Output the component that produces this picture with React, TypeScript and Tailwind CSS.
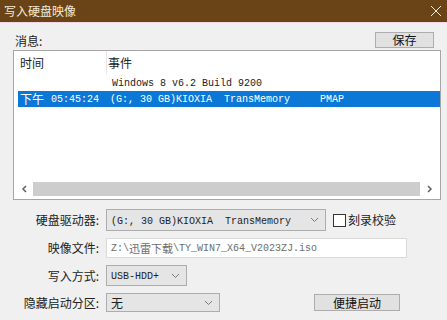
import React from 'react';

const cjk = { fontFamily: '"Noto Sans CJK SC", "Microsoft YaHei", sans-serif' };
const mono = { fontFamily: '"Liberation Mono", "DejaVu Sans Mono", monospace' };

function Chevron() {
  return (
    <svg width="9" height="6" viewBox="0 0 9 6" className="shrink-0">
      <path d="M1 1 L4.5 4.5 L8 1" fill="none" stroke="#7a7a7a" strokeWidth="1" />
    </svg>
  );
}

function Combo({ width, height, children }: { width: string; height: string; children: React.ReactNode }) {
  return (
    <div
      className={`flex items-center justify-between border border-[#adadad] bg-[#e5e5e5] pl-[4px] pr-[6px] ${width} ${height}`}
    >
      <div className="truncate text-[10px] text-[#222]">{children}</div>
      <Chevron />
    </div>
  );
}

function Label({ children }: { children: React.ReactNode }) {
  return (
    <div className="w-[101px] pr-[2px] text-right text-[12px] leading-none text-[#222]" style={cjk}>
      {children}
    </div>
  );
}

export default function App() {
  return (
    <div className="w-[447px] h-[320px] overflow-hidden bg-[#f0f0f0] flex flex-col" style={cjk}>
      {/* title bar */}
      <div className="h-[22px] bg-[#6a4416] flex items-center justify-between pl-[4px] pr-[5px] shrink-0">
        <span className="text-[12px] text-[#f3ead9] leading-none">写入硬盘映像</span>
        <svg width="12" height="12" viewBox="0 0 12 12">
          <path d="M1 1 L11 11 M11 1 L1 11" stroke="#f3ead9" strokeWidth="1" />
        </svg>
      </div>
      <div className="h-[1px] bg-[#f2d6e8] shrink-0" />

      {/* message header */}
      <div className="h-[27px] flex items-end justify-between pl-[15px] pr-[13px] shrink-0">
        <span className="text-[12px] leading-none text-[#222] mb-[3px]">消息:</span>
        <button className="w-[59px] h-[16px] mb-[2px] border border-[#adadad] bg-[#e1e1e1] text-[12px] leading-none text-[#111] flex items-center justify-center">
          保存
        </button>
      </div>

      {/* list box */}
      <div className="ml-[13px] mr-[6px] h-[150px] border border-[#a6a6a6] bg-white flex flex-col shrink-0">
        <div className="h-[24px] flex items-center text-[12px] text-[#222] shrink-0">
          <div className="w-[92px] pl-[6px] h-full flex items-center">时间</div>
          <div className="w-[1px] h-full bg-[#e8e8e8]" />
          <div className="pl-[1px]">事件</div>
        </div>
        <div className="h-[16px] flex items-center shrink-0 pl-[98px] text-[10px] text-[#222]" style={mono}>
          Windows 8 v6.2 Build 9200
        </div>
        <div className="h-[16px] ml-[4px] flex items-center bg-[#0b78d7] text-white shrink-0">
          <div className="w-[92px] pl-[2px] flex items-center whitespace-pre">
            <span className="text-[12px]" style={cjk}>下午</span>
            <span className="text-[10px] ml-[7px]" style={mono}>05:45:24</span>
          </div>
          <span className="text-[10px] whitespace-pre" style={mono}>(G:, 30 GB)KIOXIA  TransMemory     PMAP</span>
        </div>
        <div className="flex-1" />
        <div className="h-[18px] flex items-center mb-[1px] shrink-0">
          <div className="w-[19px] flex justify-center">
            <svg width="6" height="8" viewBox="0 0 6 8">
              <path d="M5 1 L2 4 L5 7" fill="none" stroke="#606060" strokeWidth="1.5" />
            </svg>
          </div>
          <div className="flex-1 h-[14px] bg-[#cdcdcd]" />
          <div className="w-[20px] flex justify-center">
            <svg width="6" height="8" viewBox="0 0 6 8">
              <path d="M1 1 L4 4 L1 7" fill="none" stroke="#606060" strokeWidth="1.5" />
            </svg>
          </div>
        </div>
      </div>

      {/* form */}
      <div className="mt-[9px] flex items-center">
        <Label>硬盘驱动器:</Label>
        <div className="ml-[5px]">
          <Combo width="w-[220px]" height="h-[22px]">
            <span className="whitespace-pre" style={mono}>(G:, 30 GB)KIOXIA  TransMemory</span>
          </Combo>
        </div>
        <div className="ml-[7px] flex items-center">
          <div className="w-[13px] h-[13px] border border-[#333] bg-white" />
          <span className="ml-[2px] text-[12px] leading-none text-[#222]">刻录校验</span>
        </div>
      </div>

      <div className="mt-[7px] flex items-center">
        <Label>映像文件:</Label>
        <div className="ml-[5px] w-[301px] h-[20px] border border-[#d9d9d9] bg-white flex items-center pl-[4px] text-[#6d6d6d] whitespace-pre">
          <span className="text-[10px]" style={mono}>Z:\</span>
          <span className="text-[11px]" style={cjk}>迅雷下载</span>
          <span className="text-[10px]" style={mono}>\TY_WIN7_X64_V2023ZJ.iso</span>
        </div>
      </div>

      <div className="mt-[7px] flex items-center">
        <Label>写入方式:</Label>
        <div className="ml-[5px]">
          <Combo width="w-[81px]" height="h-[21px]">
            <span style={mono}>USB-HDD+</span>
          </Combo>
        </div>
      </div>

      <div className="mt-[7px] flex items-center">
        <Label>隐藏启动分区:</Label>
        <div className="ml-[5px]">
          <Combo width="w-[114px]" height="h-[19px]">
            <span className="text-[12px]" style={cjk}>无</span>
          </Combo>
        </div>
        <button className="ml-[94px] w-[86px] h-[17px] border border-[#adadad] bg-[#e1e1e1] text-[12px] leading-none text-[#111] flex items-center justify-center">
          便捷启动
        </button>
      </div>
    </div>
  );
}
